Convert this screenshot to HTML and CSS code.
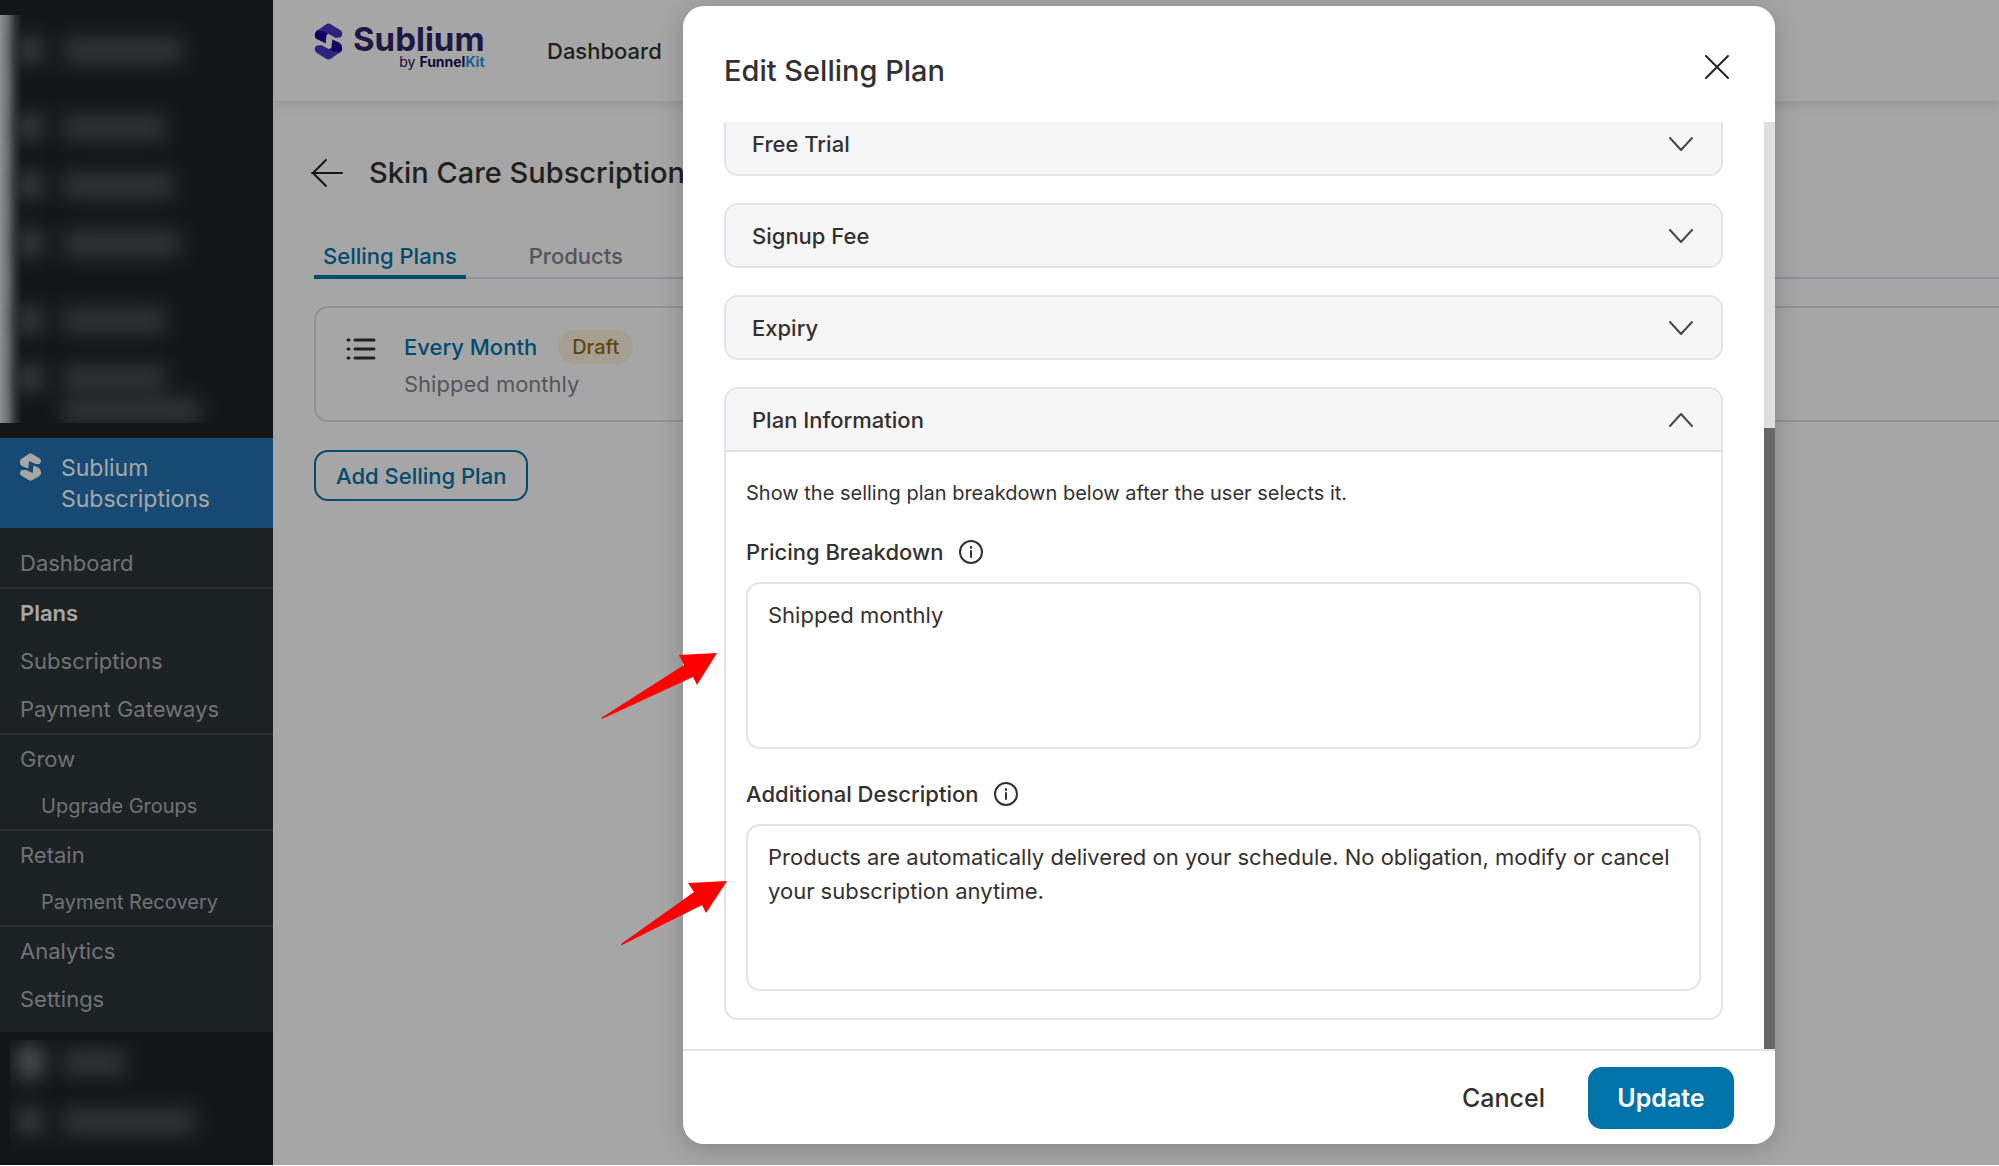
FILE: index.html
```html
<!DOCTYPE html>
<html lang="en">
<head>
<meta charset="utf-8">
<title>Edit Selling Plan</title>
<link rel="stylesheet" href="styles.css">
</head>
<body>
<div class="app">
  <aside class="sidebar">
    <div class="redacted redacted-top" aria-hidden="true">
      <div class="row"><i></i><b class="w122"></b></div>
      <div class="row gap-lg"><i></i><b class="w105"></b></div>
      <div class="row"><i></i><b class="w113"></b></div>
      <div class="row"><i></i><b class="w119"></b></div>
      <div class="row gap-lg"><i></i><b class="w105"></b></div>
      <div class="row"><i></i><b class="w105"></b></div>
      <div class="row row-tail"><b class="w139"></b></div>
    </div>
    <a class="menu-current" href="#">
      <svg class="menu-mark" viewBox="0 0 30 38" aria-hidden="true"><path d="M1 14C0 11 1 8 4 7L13 1Q15 0 17 1L27 7Q31 10 28 14L27 15H22L13 11L12 21L4 18Q1 17 1 14ZM29 25C30 28 29 30 26 32L17 37Q15 38 13 37L3 31Q-1 28 2 24L3 23H9L18 27L19 17L26 20Q29 22 29 25Z"/></svg>
      <span>Sublium Subscriptions</span>
    </a>
    <nav class="submenu">
      <a href="#">Dashboard</a>
      <a class="active ruled" href="#">Plans</a>
      <a href="#">Subscriptions</a>
      <a href="#">Payment Gateways</a>
      <a class="ruled" href="#">Grow</a>
      <a class="child" href="#">Upgrade Groups</a>
      <a class="ruled" href="#">Retain</a>
      <a class="child" href="#">Payment Recovery</a>
      <a class="ruled" href="#">Analytics</a>
      <a href="#">Settings</a>
    </nav>
    <div class="redacted redacted-bottom" aria-hidden="true">
      <div class="row"><i class="bright"></i><b class="w65"></b></div>
      <div class="row"><i></i><b class="w134"></b></div>
    </div>
  </aside>

  <div class="page">
    <header class="topbar">
      <a class="brand" href="#">
        <svg class="brand-mark" viewBox="0 0 30 38" aria-hidden="true">
          <path fill="#1d0090" d="M1 14Q0 9 4 7L20 9L13 12L12 21L4 17Q1 16 1 14ZM29 25Q30 29 26 31L10 28L18 26L19 17L26 20Q29 22 29 25Z"/>
          <path fill="#4538c0" d="M3 8L13 1Q15 0 17 1L27 7Q30 9 29 13Q28 15 25 15H22Q15 11 8 8Q5 7 2 9ZM27 30L17 37Q15 38 13 37L3 31Q0 29 1 25Q2 23 5 23H8Q15 27 22 30Q25 31 28 29Z"/>
        </svg>
        <span class="brand-text"><span class="brand-name">Sublium</span><span class="brand-by">by <b>Funnel</b><em>Kit</em></span></span>
      </a>
      <a class="nav-link" href="#">Dashboard</a>
    </header>
    <main class="content">
      <div class="heading">
        <a class="back" href="#" aria-label="Back"><svg viewBox="0 0 32 30" aria-hidden="true"><path d="M31 15H1M15 2L2 15L15 28"/></svg></a>
        <h1>Skin Care Subscription</h1>
      </div>
      <nav class="tabs">
        <a class="selected" href="#">Selling Plans</a>
        <a href="#">Products</a>
      </nav>
      <section class="plan">
        <svg class="list-icon" viewBox="0 0 30 24" aria-hidden="true"><path d="M9 3H28M9 12H28M9 21H28M2 3H3M2 12H3M2 21H3"/></svg>
        <div class="plan-text">
          <div class="plan-title"><a href="#">Every Month</a><span class="badge">Draft</span></div>
          <p>Shipped monthly</p>
        </div>
      </section>
      <button class="add" type="button">Add Selling Plan</button>
    </main>
  </div>

  <div class="overlay">
    <div class="modal" role="dialog" aria-labelledby="modal-title">
      <header class="modal-head">
        <h2 id="modal-title">Edit Selling Plan</h2>
        <button class="close" type="button" aria-label="Close"><svg viewBox="0 0 24 24" aria-hidden="true"><path d="M1 1L23 23M23 1L1 23"/></svg></button>
      </header>
      <div class="modal-body">
        <div class="sections">
          <section class="panel"><button class="panel-head" type="button">Free Trial<svg viewBox="0 0 24 14" aria-hidden="true"><path d="M1 1L12 13L23 1"/></svg></button></section>
          <section class="panel"><button class="panel-head" type="button">Signup Fee<svg viewBox="0 0 24 14" aria-hidden="true"><path d="M1 1L12 13L23 1"/></svg></button></section>
          <section class="panel"><button class="panel-head" type="button">Expiry<svg viewBox="0 0 24 14" aria-hidden="true"><path d="M1 1L12 13L23 1"/></svg></button></section>
          <section class="panel">
            <button class="panel-head" type="button">Plan Information<svg viewBox="0 0 24 14" aria-hidden="true"><path d="M1 13L12 1L23 13"/></svg></button>
            <div class="panel-body">
              <p class="hint">Show the selling plan breakdown below after the user selects it.</p>
              <div class="field">
                <div class="label-row">
                  <label for="pricing">Pricing Breakdown</label>
                  <svg class="info" viewBox="0 0 24 24" aria-hidden="true"><circle cx="12" cy="12" r="11"/><path d="M12 11V17M12 7V8"/></svg>
                </div>
                <textarea id="pricing">Shipped monthly</textarea>
              </div>
              <div class="field">
                <div class="label-row">
                  <label for="description">Additional Description</label>
                  <svg class="info" viewBox="0 0 24 24" aria-hidden="true"><circle cx="12" cy="12" r="11"/><path d="M12 11V17M12 7V8"/></svg>
                </div>
                <textarea id="description">Products are automatically delivered on your schedule. No obligation, modify or cancel your subscription anytime.</textarea>
              </div>
            </div>
          </section>
        </div>
        <div class="scrollbar" aria-hidden="true"><div class="thumb"></div></div>
      </div>
      <footer class="modal-foot">
        <button class="cancel" type="button">Cancel</button>
        <button class="update" type="button">Update</button>
      </footer>
      <svg class="pointer pointer-one" viewBox="0 0 117 66" aria-hidden="true"><path d="M0 65L83 12L78 2L116 0L96 32L92 24L3 65Q0 66 0 65Z"/></svg>
      <svg class="pointer pointer-two" viewBox="0 0 117 66" aria-hidden="true"><path d="M10 63L83 11L77 2L116 0L95 32L91 24L13 63Q10 65 10 63Z"/></svg>
    </div>
  </div>
</div>
</body>
</html>
```
FILE: styles.css
```css
* { box-sizing: border-box; }
body { margin: 0; background: #fff; font-family: Inter, "Liberation Sans", sans-serif; color: #353030; }
a { color: inherit; text-decoration: none; }
h1, h2, p { margin: 0; font-weight: 500; }
button { font: inherit; color: inherit; cursor: pointer; }
svg { display: block; flex: none; fill: none; stroke-linecap: round; stroke-linejoin: round; }

.app { position: relative; display: flex; height: calc(100vh - 1px); overflow: hidden; }

/* Admin menu */
.sidebar { width: 273px; flex: none; display: flex; flex-direction: column; background: #1d2327; color: #fff; overflow: hidden; }
.redacted { flex: none; overflow: hidden; }
.redacted-top { height: 408px; margin: 15px 0; padding-top: 6px; background: linear-gradient(90deg, #dde1e4 0, #a4a9ad 8px, #4a5054 15px, #1d2327 22px); }
.row { height: 58px; display: flex; align-items: center; gap: 20px; padding-left: 18px; filter: blur(10px); }
.row i { width: 24px; height: 26px; background: #5e6367; border-radius: 8px; }
.row b { height: 25px; background: #4d5256; border-radius: 8px; }
.gap-lg { margin-top: 19px; }
.row-tail { padding-left: 62px; margin-top: -26px; }
.w65 { width: 65px; }
.w105 { width: 105px; }
.w113 { width: 113px; }
.w119 { width: 119px; }
.w122 { width: 122px; }
.w134 { width: 134px; }
.w139 { width: 139px; }
.redacted-bottom { margin: 8px 0 0 10px; height: 110px; }
.redacted-bottom .row { margin: -7px 0 0 -10px; }
.redacted-bottom .row + .row { margin-top: 1px; }
.row .bright { background: #80868a; height: 32px; }

.menu-current { display: flex; gap: 18px; height: 90px; padding: 15px 18px; background: #2271b1; font-size: 23px; line-height: 31px; }
.menu-mark { width: 25px; height: 28px; fill: #fff; }
.submenu { background: #2c3338; padding: 11px 0 9px; }
.submenu a { display: flex; align-items: center; height: 48px; padding-left: 20px; font-size: 22px; color: #acb0b4; }
.submenu .ruled { border-top: 2px solid #42484d; height: 50px; }
.submenu .child { padding-left: 41px; font-size: 20px; height: 46px; }
.submenu .active { font-weight: 600; color: #fff; }

/* Page behind the dialog */
.page { flex: 1; min-width: 0; background: #fff; overflow: hidden; }
.topbar { display: flex; align-items: flex-start; height: 101px; padding: 23px 0 0 41px; box-shadow: 0 2px 12px rgba(0, 0, 0, .14); }
.brand { display: flex; gap: 10px; width: 233px; }
.brand-mark { width: 29px; height: 37px; }
.brand-text { display: flex; flex-direction: column; align-items: flex-end; color: #2d266b; }
.brand-name { font-size: 33px; line-height: 32px; font-weight: 700; }
.brand-by { font-size: 14px; line-height: 14px; color: #1c0b5c; }
.brand-by em { font-style: normal; font-weight: 700; color: #2a94dc; }
.nav-link { font-size: 22px; line-height: 28px; font-weight: 500; margin-top: 14px; }
.content { padding: 49px 0 0 41px; }
.heading { display: flex; align-items: center; gap: 26px; height: 46px; margin-left: -3px; white-space: nowrap; }
.back svg { width: 32px; height: 30px; stroke: #222; stroke-width: 2; }
.heading h1 { font-size: 29px; line-height: 46px; }
.tabs { display: flex; gap: 54px; margin-top: 40px; border-bottom: 2px solid #dedfea; font-size: 22px; font-weight: 500; color: #82838e; }
.tabs a { padding: 0 9px; height: 43px; line-height: 40px; margin-bottom: -2px; }
.tabs .selected { color: #0073aa; border-bottom: 4px solid #0073aa; }
.plan { display: flex; gap: 28px; height: 116px; margin: 27px -20px 0 0; padding: 20px 30px; border: 2px solid #dedfea; border-radius: 14px; }
.list-icon { width: 30px; height: 24px; margin-top: 9px; stroke: #353030; stroke-width: 3; }
.plan-title { display: flex; align-items: center; gap: 21px; height: 37px; font-size: 22px; font-weight: 500; color: #0073aa; }
.plan p { font-size: 22px; line-height: 38px; font-weight: 400; color: #82838e; }
.badge { padding: 0 14px; border-radius: 17px; background: #fef5e0; color: #9a6a16; font-size: 20px; line-height: 34px; }
.add { display: block; margin-top: 28px; padding: 0 20px; height: 51px; border: 2px solid #0073aa; border-radius: 14px; background: none; color: #0073aa; font-size: 22px; font-weight: 500; }

/* Dialog */
.overlay { position: absolute; inset: 0; display: flex; justify-content: flex-end; padding: 6px 224px 21px 0; background: rgba(0, 0, 0, .35); }
.modal { position: relative; width: 1092px; display: flex; flex-direction: column; background: #fff; border-radius: 21px; box-shadow: 0 4px 24px rgba(0, 0, 0, .2); }
.modal-head { flex: none; display: flex; align-items: center; justify-content: space-between; height: 116px; padding: 5px 46px 0 41px; }
.modal-head h2 { font-size: 29px; line-height: 40px; padding-top: 9px; }
.close { padding: 0; border: 0; background: none; }
.close svg { width: 24px; height: 24px; stroke: #222; stroke-width: 2; }
.modal-body { flex: 1; min-height: 0; display: flex; overflow: hidden; }
.sections { flex: 1; display: flex; flex-direction: column; justify-content: flex-end; gap: 27px; padding: 0 41px 29px; }
.panel { flex: none; border: 2px solid #e3e3ee; border-radius: 14px; overflow: hidden; }
.panel-head { display: flex; align-items: center; justify-content: space-between; width: 100%; height: 61px; padding: 0 28px 0 26px; border: 0; background: #f6f6f6; font-size: 22px; font-weight: 500; text-align: left; }
.panel-head svg { width: 24px; height: 14px; stroke: #4a4646; stroke-width: 2; }
.panel-body { border-top: 2px solid #e3e3ee; padding: 27px 20px; }
.hint { font-size: 20px; line-height: 28px; font-weight: 400; }
.field { margin-top: 29px; }
.label-row { display: flex; align-items: center; gap: 16px; height: 32px; margin-bottom: 14px; font-size: 22px; font-weight: 500; }
.info { width: 24px; height: 24px; stroke: #353030; stroke-width: 2; }
.field textarea { display: block; width: 100%; height: 167px; padding: 14px 20px; border: 2px solid #e3e3ee; border-radius: 14px; background: #fff; color: #353030; font: 400 22px/34px Inter, "Liberation Sans", sans-serif; resize: none; outline: 0; overflow: hidden; }
.scrollbar { width: 11px; display: flex; flex-direction: column; justify-content: flex-end; background: #dedede; }
.thumb { height: 67%; background: #666; }
.modal-foot { flex: none; display: flex; align-items: center; justify-content: flex-end; gap: 16px; height: 95px; padding-right: 41px; border-top: 2px solid #e3e3ee; font-size: 25px; font-weight: 500; }
.cancel { border: 0; background: none; padding: 0 27px; }
.update { height: 62px; width: 146px; padding: 0; border: 0; border-radius: 14px; background: #0073aa; color: #fff; font-weight: 600; }
.pointer { position: absolute; width: 117px; height: 66px; fill: #f00; }
.pointer-one { left: -82px; top: 647px; }
.pointer-two { left: -72px; top: 875px; }
```
